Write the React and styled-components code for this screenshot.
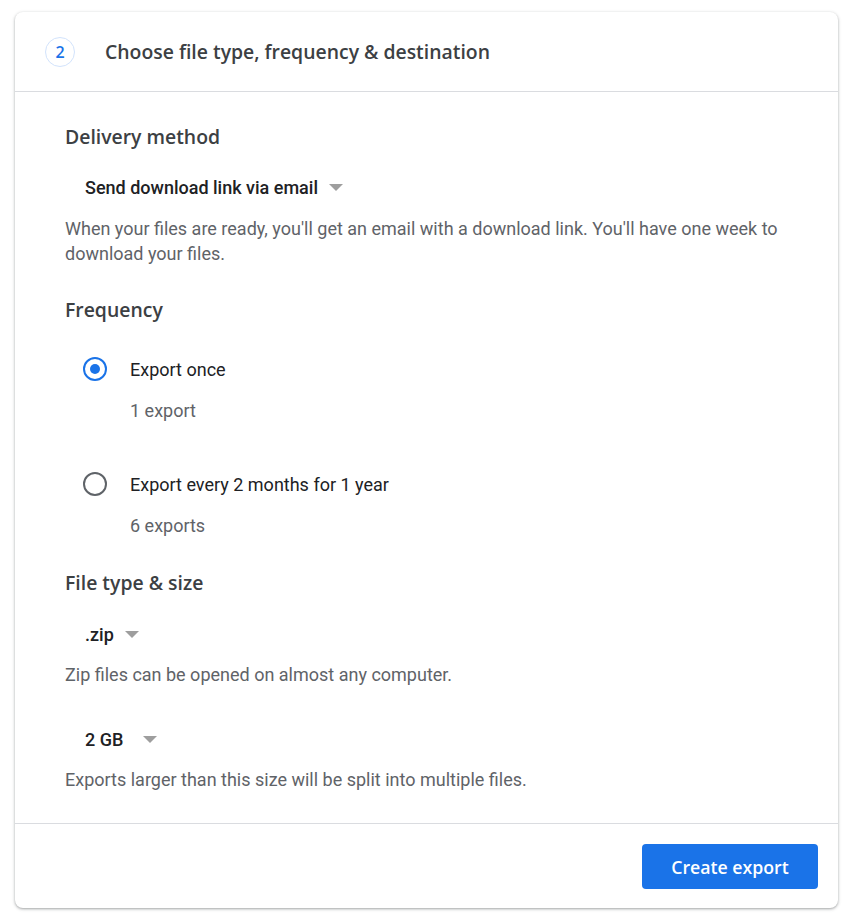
import React, { useState } from "react";
import styled, { createGlobalStyle } from "styled-components";

const GlobalStyle = createGlobalStyle`
  html, body {
    margin: 0;
    padding: 0;
    background: #ffffff;
  }
  body {
    font-family: Roboto, "Liberation Sans", sans-serif;
  }
`;

const Page = styled.div`
  padding: 12px 16px 16px 15px;
`;

const Card = styled.div`
  width: 823px;
  background: #fff;
  border-radius: 8px;
  box-shadow: 0 1px 2px rgba(60, 64, 67, 0.3), 0 1px 3px 1px rgba(60, 64, 67, 0.15);
  display: flex;
  flex-direction: column;
`;

const Header = styled.div`
  height: 79px;
  display: flex;
  align-items: center;
  padding-left: 30px;
  border-bottom: 1px solid #dadce0;
`;

const StepBadge = styled.div`
  box-sizing: border-box;
  width: 30px;
  height: 30px;
  border-radius: 50%;
  border: 1px solid #d2e3fc;
  color: #1a73e8;
  font-family: "Open Sans", sans-serif;
  font-size: 16px;
  font-weight: 600;
  display: flex;
  align-items: center;
  justify-content: center;
`;

const Title = styled.h2`
  margin: 0 0 0 30px;
  font-family: "Open Sans", sans-serif;
  font-size: 19.4px;
  font-weight: 600;
  color: #3c4043;
`;

const Body = styled.div`
  padding: 33px 50px 31px;
  border-bottom: 1px solid #dadce0;
`;

const SectionTitle = styled.h3`
  margin: ${(p) => p.$top || 0}px 0 0;
  font-family: "Open Sans", sans-serif;
  font-size: 19.4px;
  font-weight: 600;
  line-height: 24px;
  color: #3c4043;
`;

const Select = styled.div`
  margin: ${(p) => p.$top}px 0 0 20px;
  display: flex;
  align-items: center;
  height: 24px;
  font-size: 18px;
  font-weight: 500;
  color: #202124;
`;

const Caret = styled.span`
  margin-left: ${(p) => p.$gap}px;
  width: 0;
  height: 0;
  border-left: 7px solid transparent;
  border-right: 7px solid transparent;
  border-top: 7px solid #9e9e9e;
`;

const Help = styled.p`
  margin: ${(p) => p.$top}px 0 0;
  font-size: 18px;
  line-height: 25px;
  color: #5f6368;
`;

const RadioRow = styled.label`
  margin: ${(p) => p.$top}px 0 0 18px;
  display: flex;
  align-items: center;
  height: 24px;
  font-size: 18px;
  color: #202124;
  cursor: pointer;
`;

const RadioCircle = styled.span`
  box-sizing: border-box;
  width: 24px;
  height: 24px;
  border-radius: 50%;
  border: 2px solid ${(p) => (p.$checked ? "#1a73e8" : "#5f6368")};
  display: flex;
  align-items: center;
  justify-content: center;
  margin-right: 23px;

  &::after {
    content: "";
    width: 10px;
    height: 10px;
    border-radius: 50%;
    background: #1a73e8;
    display: ${(p) => (p.$checked ? "block" : "none")};
  }
`;

const SubText = styled.div`
  margin: 18px 0 0 65px;
  font-size: 18px;
  line-height: 24px;
  color: #5f6368;
`;

const Footer = styled.div`
  display: flex;
  justify-content: flex-end;
  padding: 20px 20px 19px;
`;

const PrimaryButton = styled.button`
  width: 176px;
  height: 45px;
  border: none;
  border-radius: 4px;
  background: #1a73e8;
  color: #fff;
  font-family: "Open Sans", sans-serif;
  font-size: 17.7px;
  font-weight: 600;
  cursor: pointer;
`;

const options = [
  { id: "once", label: "Export once", sub: "1 export" },
  { id: "every", label: "Export every 2 months for 1 year", sub: "6 exports" },
];

export default function App() {
  const [freq, setFreq] = useState("once");

  return (
    <Page>
      <GlobalStyle />
      <Card>
        <Header>
          <StepBadge>2</StepBadge>
          <Title>Choose file type, frequency &amp; destination</Title>
        </Header>
        <Body>
          <SectionTitle>Delivery method</SectionTitle>
          <Select $top={26}>
            Send download link via email
            <Caret $gap={11} />
          </Select>
          <Help $top={17}>
            When your files are ready, you'll get an email with a download link. You'll have one week to
            download your files.
          </Help>

          <SectionTitle $top={32}>Frequency</SectionTitle>
          {options.map((o, i) => (
            <div key={o.id} onClick={() => setFreq(o.id)}>
              <RadioRow $top={i === 0 ? 35 : 49}>
                <RadioCircle $checked={freq === o.id} />
                {o.label}
              </RadioRow>
              <SubText>{o.sub}</SubText>
            </div>
          ))}

          <SectionTitle $top={33}>File type &amp; size</SectionTitle>
          <Select $top={27}>
            .zip
            <Caret $gap={11} />
          </Select>
          <Help $top={16}>Zip files can be opened on almost any computer.</Help>
          <Select $top={40}>
            2 GB
            <Caret $gap={20} />
          </Select>
          <Help $top={16}>Exports larger than this size will be split into multiple files.</Help>
        </Body>
        <Footer>
          <PrimaryButton>Create export</PrimaryButton>
        </Footer>
      </Card>
    </Page>
  );
}
